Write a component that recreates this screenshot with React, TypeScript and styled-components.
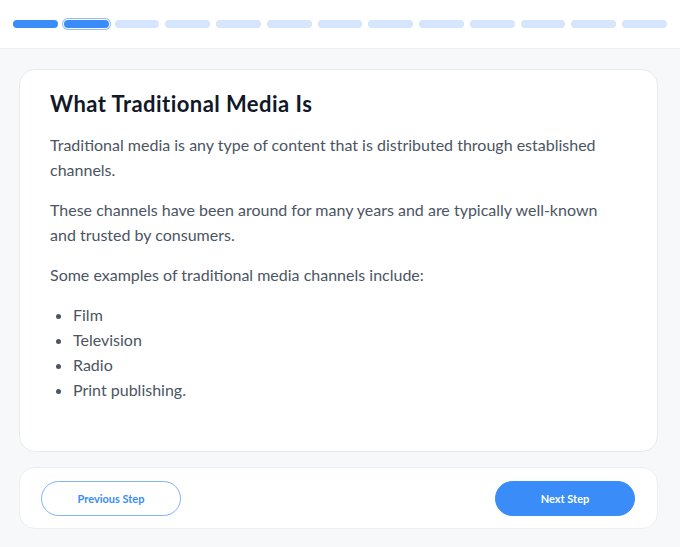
import React from 'react';
import styled, { createGlobalStyle } from 'styled-components';

const GlobalStyle = createGlobalStyle`
  html, body {
    margin: 0;
    padding: 0;
    background: #f7f8fa;
    font-family: Lato, 'Noto Sans', sans-serif;
  }
  * {
    box-sizing: border-box;
  }
`;

const Page = styled.div`
  min-height: 547px;
  background: #f7f8fa;
`;

const TopBar = styled.header`
  height: 49px;
  background: #ffffff;
  border-bottom: 1px solid #eceef1;
  display: flex;
  align-items: center;
  padding: 0 13px 1px;
`;

const Steps = styled.div`
  display: flex;
  gap: 6px;
  width: 100%;
`;

const Step = styled.div<{ $done?: boolean; $current?: boolean }>`
  flex: 1;
  height: 8px;
  border-radius: 4px;
  background: ${(p) => (p.$done ? '#3a8cf8' : '#d4e5fd')};
  box-shadow: ${(p) => (p.$current ? '0 0 0 1px #ffffff, 0 0 0 2px #8fbcf8' : 'none')};
`;

const Main = styled.main`
  padding: 20px 22px 19px 19px;
  display: flex;
  flex-direction: column;
  gap: 15px;
`;

const Card = styled.section`
  background: #ffffff;
  border: 1px solid #e9ebee;
  border-radius: 16px;
  padding: 20px 34px 49px 30px;
`;

const Title = styled.h1`
  margin: 0 0 14px;
  font-size: 22px;
  font-weight: 700;
  line-height: 28px;
  letter-spacing: 0.45px;
  color: #111827;
`;

const Text = styled.p`
  margin: 0 0 15px;
  font-size: 16px;
  line-height: 25px;
  color: #4b5563;
`;

const List = styled.ul`
  margin: 0;
  padding-left: 23px;
  font-size: 16px;
  line-height: 25px;
  color: #4b5563;
`;

const Footer = styled.div`
  background: #ffffff;
  border: 1px solid #eceef1;
  border-radius: 16px;
  height: 62px;
  padding: 0 22px 0 21px;
  display: flex;
  align-items: center;
  justify-content: space-between;
`;

const StepButton = styled.button<{ $primary?: boolean }>`
  width: 140px;
  height: 35px;
  border-radius: 18px;
  font-family: inherit;
  font-size: 11px;
  font-weight: 700;
  cursor: pointer;
  border: 1px solid ${(p) => (p.$primary ? '#3a8cf8' : '#80b4fb')};
  background: ${(p) => (p.$primary ? '#3a8cf8' : '#ffffff')};
  color: ${(p) => (p.$primary ? '#ffffff' : '#3a8cf8')};
`;

const TOTAL_STEPS = 13;
const CURRENT = 1;

const App: React.FC = () => {
  return (
    <Page>
      <GlobalStyle />
      <TopBar>
        <Steps>
          {Array.from({ length: TOTAL_STEPS }, (_, i) => (
            <Step key={i} $done={i <= CURRENT} $current={i === CURRENT} />
          ))}
        </Steps>
      </TopBar>
      <Main>
        <Card>
          <Title>What Traditional Media Is</Title>
          <Text>
            Traditional media is any type of content that is distributed through established
            channels.
          </Text>
          <Text>
            These channels have been around for many years and are typically well-known and
            trusted by consumers.
          </Text>
          <Text>Some examples of traditional media channels include:</Text>
          <List>
            <li>Film</li>
            <li>Television</li>
            <li>Radio</li>
            <li>Print publishing.</li>
          </List>
        </Card>
        <Footer>
          <StepButton>Previous Step</StepButton>
          <StepButton $primary>Next Step</StepButton>
        </Footer>
      </Main>
    </Page>
  );
};

export default App;
